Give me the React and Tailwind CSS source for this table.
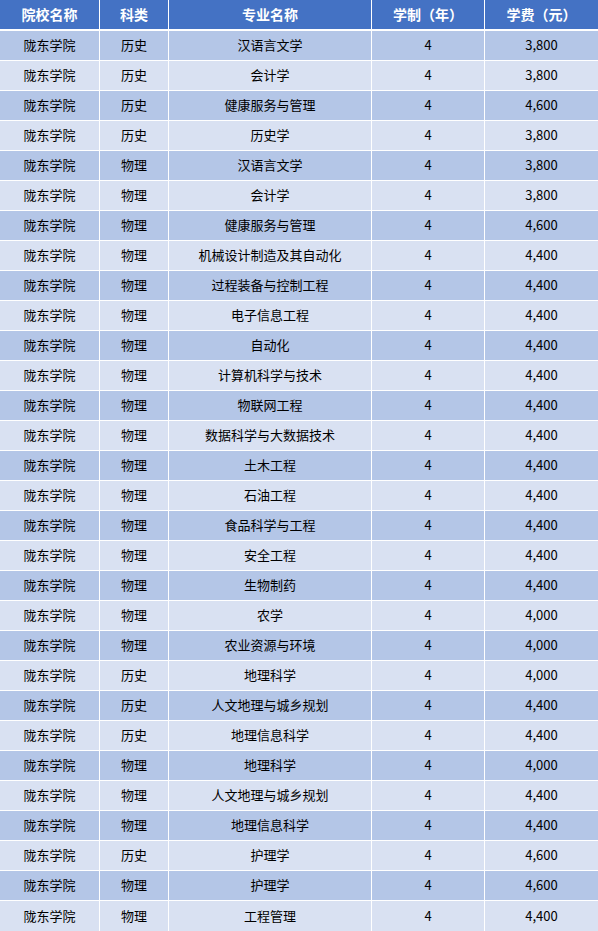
const rows = [
  ["历史", "汉语言文学", "3,800"],
  ["历史", "会计学", "3,800"],
  ["历史", "健康服务与管理", "4,600"],
  ["历史", "历史学", "3,800"],
  ["物理", "汉语言文学", "3,800"],
  ["物理", "会计学", "3,800"],
  ["物理", "健康服务与管理", "4,600"],
  ["物理", "机械设计制造及其自动化", "4,400"],
  ["物理", "过程装备与控制工程", "4,400"],
  ["物理", "电子信息工程", "4,400"],
  ["物理", "自动化", "4,400"],
  ["物理", "计算机科学与技术", "4,400"],
  ["物理", "物联网工程", "4,400"],
  ["物理", "数据科学与大数据技术", "4,400"],
  ["物理", "土木工程", "4,400"],
  ["物理", "石油工程", "4,400"],
  ["物理", "食品科学与工程", "4,400"],
  ["物理", "安全工程", "4,400"],
  ["物理", "生物制药", "4,400"],
  ["物理", "农学", "4,000"],
  ["物理", "农业资源与环境", "4,000"],
  ["历史", "地理科学", "4,000"],
  ["历史", "人文地理与城乡规划", "4,400"],
  ["历史", "地理信息科学", "4,400"],
  ["物理", "地理科学", "4,000"],
  ["物理", "人文地理与城乡规划", "4,400"],
  ["物理", "地理信息科学", "4,400"],
  ["历史", "护理学", "4,600"],
  ["物理", "护理学", "4,600"],
  ["物理", "工程管理", "4,400"],
];

const cols = "grid grid-cols-[99px_68px_202px_112px_113px] gap-x-px";
const font = { fontFamily: '"Noto Sans CJK SC", "Microsoft YaHei", sans-serif' };

export default function App() {
  return (
    <div className="w-[598px] bg-white" style={font}>
      <div className={`${cols} h-[29px] mb-[2px]`}>
        {["院校名称", "科类", "专业名称", "学制（年）", "学费（元）"].map((h) => (
          <div key={h} className="bg-[#4472C4] flex items-center justify-center text-white font-bold text-[14px]">
            {h}
          </div>
        ))}
      </div>
      <div className="flex flex-col gap-y-px">
        {rows.map((r, i) => {
          const bg = i % 2 === 0 ? "bg-[#B4C6E7]" : "bg-[#D9E1F2]";
          const h = i === rows.length - 1 ? "h-[30px]" : "h-[29px]";
          return (
            <div key={i} className={`${cols} ${h}`}>
              {["陇东学院", r[0], r[1], "4", r[2]].map((c, j) => (
                <div key={j} className={`${bg} flex items-center justify-center pb-px text-[13px] text-black`}>
                  {c}
                </div>
              ))}
            </div>
          );
        })}
      </div>
    </div>
  );
}
